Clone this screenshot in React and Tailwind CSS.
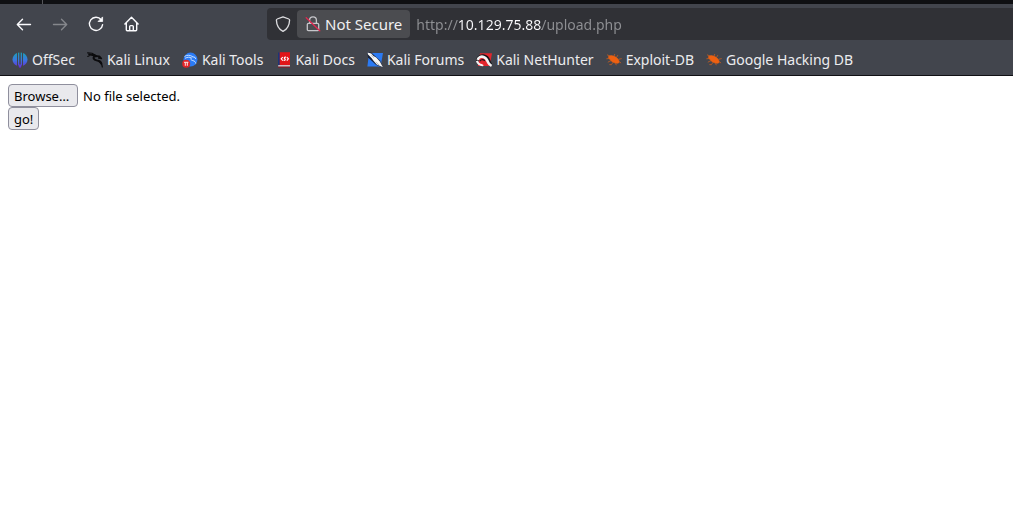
import { useRef } from "react";

function OffSecIcon() {
  return (
    <svg width="16" height="16" viewBox="0 0 16 16" aria-hidden="true">
      <defs>
        <linearGradient id="offsec" gradientUnits="userSpaceOnUse" x1="0" y1="0" x2="0" y2="16">
          <stop offset="0" stopColor="#1aa3b0" />
          <stop offset="0.5" stopColor="#3a78e0" />
          <stop offset="1" stopColor="#6a25d8" />
        </linearGradient>
      </defs>
      <g fill="url(#offsec)">
        <path d="M5 1C2.200 2.100.5 4.800.5 7.600c0 2.900 1.700 5.200 4.500 6.200Z" />
        <path d="M6 .7 7.300.4v13.400L6 13.300ZM8.700.4l1.300.3v12.600l-1.300.5Z" />
        <path d="M11 1c2.800 1.100 4.500 3.800 4.500 6.600 0 2.900-1.700 5.200-4.500 6.200Z" />
        <path d="M6.800 12.500h2.400v2.600l-1.200.9-1.200-.9Z" />
      </g>
    </svg>
  );
}

function KaliLinuxIcon() {
  return (
    <svg width="16" height="16" viewBox="0 0 16 16" aria-hidden="true">
      <g fill="none" stroke="#0b0b0d" strokeLinecap="round" strokeLinejoin="round">
        <path strokeWidth="1.100" d="M.6.900 5 1.300l3 1.600M.7 4.400l3-1.300 3.800.3M1.700 2.400l4 .3" />
        <path strokeWidth="2" d="M5.500 2.900c2 .2 3 .6 3.900 1.300-2.400-.2-3.200 1-2.700 2.500.6 1.600 2.600 1.700 4.400 2.100 2.200.5 3 1.500 3.300 3" />
        <path strokeWidth="1.600" d="m9.400 4.100 3 .3 2 2.100-2.700-.5" />
        <path strokeWidth="1.200" d="M14.300 11.500c.5 1 .9 2.200 1 3.500M13.600 11l-1.200-1" />
      </g>
    </svg>
  );
}

function KaliToolsIcon() {
  return (
    <svg width="16" height="16" viewBox="0 0 16 16" aria-hidden="true">
      <circle cx="8.500" cy="7.600" r="7" fill="#2a7bf5" />
      <path d="M2.500 4.400c3-1.700 5.500-1.400 7.800.1M3 6.300c2.700-1.400 4.800-1.300 6.600-.4-1.500 1-.6 2.300 1.200 2.700 1.800.4 2.800 1.300 3 3" fill="none" stroke="#d8e9ff" strokeWidth="0.900" />
      <path d="m10 4.600 3 .8.800 1.600" fill="none" stroke="#d8e9ff" strokeWidth="0.900" />
      <circle cx="4.200" cy="11.700" r="4" fill="#e02428" />
      <path d="M2 10.300h4.400M3.300 10.300v3.500M5.300 10.300v3.500" fill="none" stroke="#ffe5e5" strokeWidth="1" />
    </svg>
  );
}

function KaliDocsIcon() {
  return (
    <svg width="16" height="16" viewBox="0 0 16 16" aria-hidden="true">
      <path d="M3 .5h2v13H3Z" fill="#1b3579" />
      <path d="M4.700.2H15v13.200H4.700Z" fill="#e01518" />
      <path d="M3.200 13.200H15v1.500H3.200Z" fill="#e4dfe4" />
      <path d="M3 14.600h12v1H3Z" fill="#8d1722" />
      <path d="M7.800 5 6.200 6.800l1.600 1.800M11.800 5l1.600 1.800-1.600 1.800" fill="none" stroke="#fff" strokeWidth="1.100" />
      <path d="M11 5.100c-1.700-.3-2.200.9-1.200 1.600 1 .7.300 2-1.200 1.700" fill="none" stroke="#fff" strokeWidth="1.200" />
    </svg>
  );
}

function KaliForumsIcon() {
  return (
    <svg width="16" height="16" viewBox="0 0 16 16" aria-hidden="true">
      <path d="M2 1h14l-2.400 13.600H.4Z" fill="#2b7af3" />
      <path d="M.2 0 4.200.6l8.800 7.900 3 7-6.800-2.600L1 5.400Z" fill="#17213a" />
      <path d="m.5.400 3.800 1.200 2.200 2.500 2.700 1.500 3.500 3.700 3.200 6-6.200-2.900-3.400-3.900-1.600-2.300L1 2.600Z" fill="#f6f6f4" />
      <path d="m4.200 3 2.600 2.600M8.800 10l3.400 3.200" fill="none" stroke="#6b7690" strokeWidth="0.500" />
    </svg>
  );
}

function KaliNetHunterIcon() {
  return (
    <svg width="16" height="16" viewBox="0 0 16 16" aria-hidden="true">
      <path d="M4 1.200h12l-2.400 12.800H1.800Z" fill="#e2262d" />
      <path d="M1.200 9.600C.8 6 3.800 3.300 7.400 3.700c3.800.4 5.200 3.400 5.900 5.800.5 1.700 1.300 2.900 2.500 4.100" fill="none" stroke="#15151a" strokeWidth="2.800" />
      <path d="M1.600 7.800C2.400 5.300 5 4.100 7.600 4.900c3.100.9 3.700 3.700 4.700 5.700.8 1.500 1.800 2.500 3.300 3.300" fill="none" stroke="#f5f3f4" strokeWidth="2.600" />
      <path d="M1 8.700c.6 3 3.200 4.700 6.300 4.300" fill="none" stroke="#f5f3f4" strokeWidth="2.200" />
      <path d="M3.800 9.300c.9-2 3.500-2.200 5-.4" fill="none" stroke="#15151a" strokeWidth="1.100" />
      <path d="M4.300 10.200c1.200-1.500 3-1.300 4.300.3l1.600 2.300H6.800Z" fill="#e2262d" />
    </svg>
  );
}

function BugIcon() {
  return (
    <svg width="16" height="16" viewBox="0 0 16 16" aria-hidden="true">
      <path d="M2.600 4.300c1.500-1 3.300-.9 5-.2 2.300.8 4.600 2.500 5.500 4.900.5 1.700-.8 2.600-2.600 2.300-3-.3-5.500-2-6.500-3.800-1.200-.8-1.900-2-1.400-3.200Z" fill="#ee6011" stroke="#ee6011" strokeWidth="0.500" />
      <path d="M4 4 1 2.800M3 6.500.4 6.800M5 8.600l-3.200 1.600M7 10.300l-1.600 2.400-2-.1M9.500 11.300l.8 1.900M8 4l.8-2M10.500 5.500l1.300-2.300M12.500 7.300l3.200-.7M13.200 9.800l1.900 1.200" fill="none" stroke="#c95d1d" strokeWidth="0.800" />
    </svg>
  );
}

const bookmarks = [
  { label: "OffSec", Icon: OffSecIcon },
  { label: "Kali Linux", Icon: KaliLinuxIcon },
  { label: "Kali Tools", Icon: KaliToolsIcon },
  { label: "Kali Docs", Icon: KaliDocsIcon },
  { label: "Kali Forums", Icon: KaliForumsIcon },
  { label: "Kali NetHunter", Icon: KaliNetHunterIcon },
  { label: "Exploit-DB", Icon: BugIcon },
  { label: "Google Hacking DB", Icon: BugIcon },
];

function NavButton({ label, children, disabled }) {
  return (
    <button
      type="button"
      aria-label={label}
      disabled={disabled}
      className="flex size-8 items-center justify-center rounded text-[#fbfbfe] disabled:text-[#85878c]"
    >
      <svg width="16" height="16" viewBox="0 0 16 16" fill="none" stroke="currentColor" strokeWidth="1.400" strokeLinecap="round" strokeLinejoin="round" aria-hidden="true">
        {children}
      </svg>
    </button>
  );
}

function NavigationBar() {
  return (
    <div className="flex h-10 items-center pl-2">
      <nav aria-label="Browser" className="flex shrink-0 gap-1">
        <NavButton label="Back">
          <path d="M14.500 8.500h-13M6.500 3.300 1.300 8.500l5.200 5.200" />
        </NavButton>
        <NavButton label="Forward" disabled>
          <path d="M1.500 8.500h13M9.500 3.300l5.200 5.200-5.200 5.200" />
        </NavButton>
        <NavButton label="Reload">
          <path d="M13.200 3.700A6.600 6.600 0 1 0 14.600 8.600" />
          <path d="M14.600 1.300v4.200h-4.200Z" fill="currentColor" strokeWidth="0.800" />
        </NavButton>
        <NavButton label="Home">
          <path d="M.9 8 7.500 1.300 14.100 8M2.300 7v6.800c0 .6.300.9.900.9h8.600c.6 0 .9-.3.900-.9V7M5.700 14.500v-4c0-.6.300-.9.900-.9h1.800c.6 0 .9.300.9.900v4" />
        </NavButton>
      </nav>
      <div className="ml-[119px] flex h-8 min-w-0 flex-1 items-center rounded-l bg-[#303136]">
        <button type="button" aria-label="Tracking protection" className="flex h-7 w-8 shrink-0 items-center justify-center text-[#dcdcdf]">
          <svg width="16" height="16" viewBox="0 0 16 16" fill="none" stroke="currentColor" strokeWidth="1.300" strokeLinejoin="round" aria-hidden="true">
            <path d="M8 .8 13.800 3c.6.200.8.500.8 1.100-.2 5-2 8.900-6.600 11.300C3.400 13 1.600 9.100 1.400 4.100c0-.6.200-.9.800-1.100Z" />
          </svg>
        </button>
        <button type="button" className="-ml-0.5 flex h-7 shrink-0 items-center gap-1 rounded bg-[#4b4c50] px-2 text-[15px] text-[#f0f0f2]">
          <svg width="16" height="16" viewBox="0 0 16 16" fill="none" aria-hidden="true">
            <path d="M4.600 7V4.300a3.400 3.400 0 0 1 6.800 0V7M3.500 7.300h9c.8 0 1.200.4 1.200 1.200v5c0 .8-.4 1.200-1.200 1.200h-9c-.8 0-1.200-.4-1.200-1.200v-5c0-.8.400-1.200 1.200-1.200Z" stroke="#c6c6ca" strokeWidth="1.300" />
            <path d="m1.200 1.800 13.600 13" stroke="#e22850" strokeWidth="1.300" strokeLinecap="round" />
          </svg>
          Not Secure
        </button>
        <input
          type="text"
          aria-label="Address"
          defaultValue="http://10.129.75.88/upload.php"
          className="ml-1.5 h-8 min-w-0 flex-1 bg-[linear-gradient(90deg,#8f9094_42px,#fbfbfe_42px,#fbfbfe_126px,#8f9094_126px)] bg-clip-text text-sm text-transparent caret-white outline-none"
        />
      </div>
    </div>
  );
}

function BookmarksBar() {
  return (
    <nav aria-label="Bookmarks" className="flex h-[31px] items-center gap-3 overflow-hidden pl-3">
      {bookmarks.map(({ label, Icon }) => (
        <a key={label} href="#" className="flex shrink-0 items-center gap-1 text-sm text-[#ececef]">
          <Icon />
          {label}
        </a>
      ))}
    </nav>
  );
}

function UploadForm() {
  const picker = useRef(null);
  const buttonStyle = "h-[23px] rounded border border-[#8f8f9d] bg-[#e9e9ed] px-[5px] text-left leading-[22px]";
  return (
    <form className="flex flex-col items-start p-2 text-[13px] text-black" onSubmit={(e) => e.preventDefault()}>
      <div className="flex items-center gap-[5px]">
        <button type="button" className={`${buttonStyle} min-w-[70px]`} onClick={() => picker.current.click()}>
          Browse…
        </button>
        <label htmlFor="upload" className="pt-0.5">No file selected.</label>
        <input ref={picker} id="upload" type="file" className="hidden" />
      </div>
      <button type="submit" className={buttonStyle}>go!</button>
    </form>
  );
}

export default function App() {
  return (
    <div className="min-h-screen bg-white font-['Noto_Sans',sans-serif]">
      <header className="border-b border-[#101014] bg-[#42454d]">
        <div className="flex h-1 bg-[#0f1013]">
          <div className="w-[43px] border-r border-[#55565a]" />
        </div>
        <NavigationBar />
        <BookmarksBar />
      </header>
      <main>
        <UploadForm />
      </main>
    </div>
  );
}
